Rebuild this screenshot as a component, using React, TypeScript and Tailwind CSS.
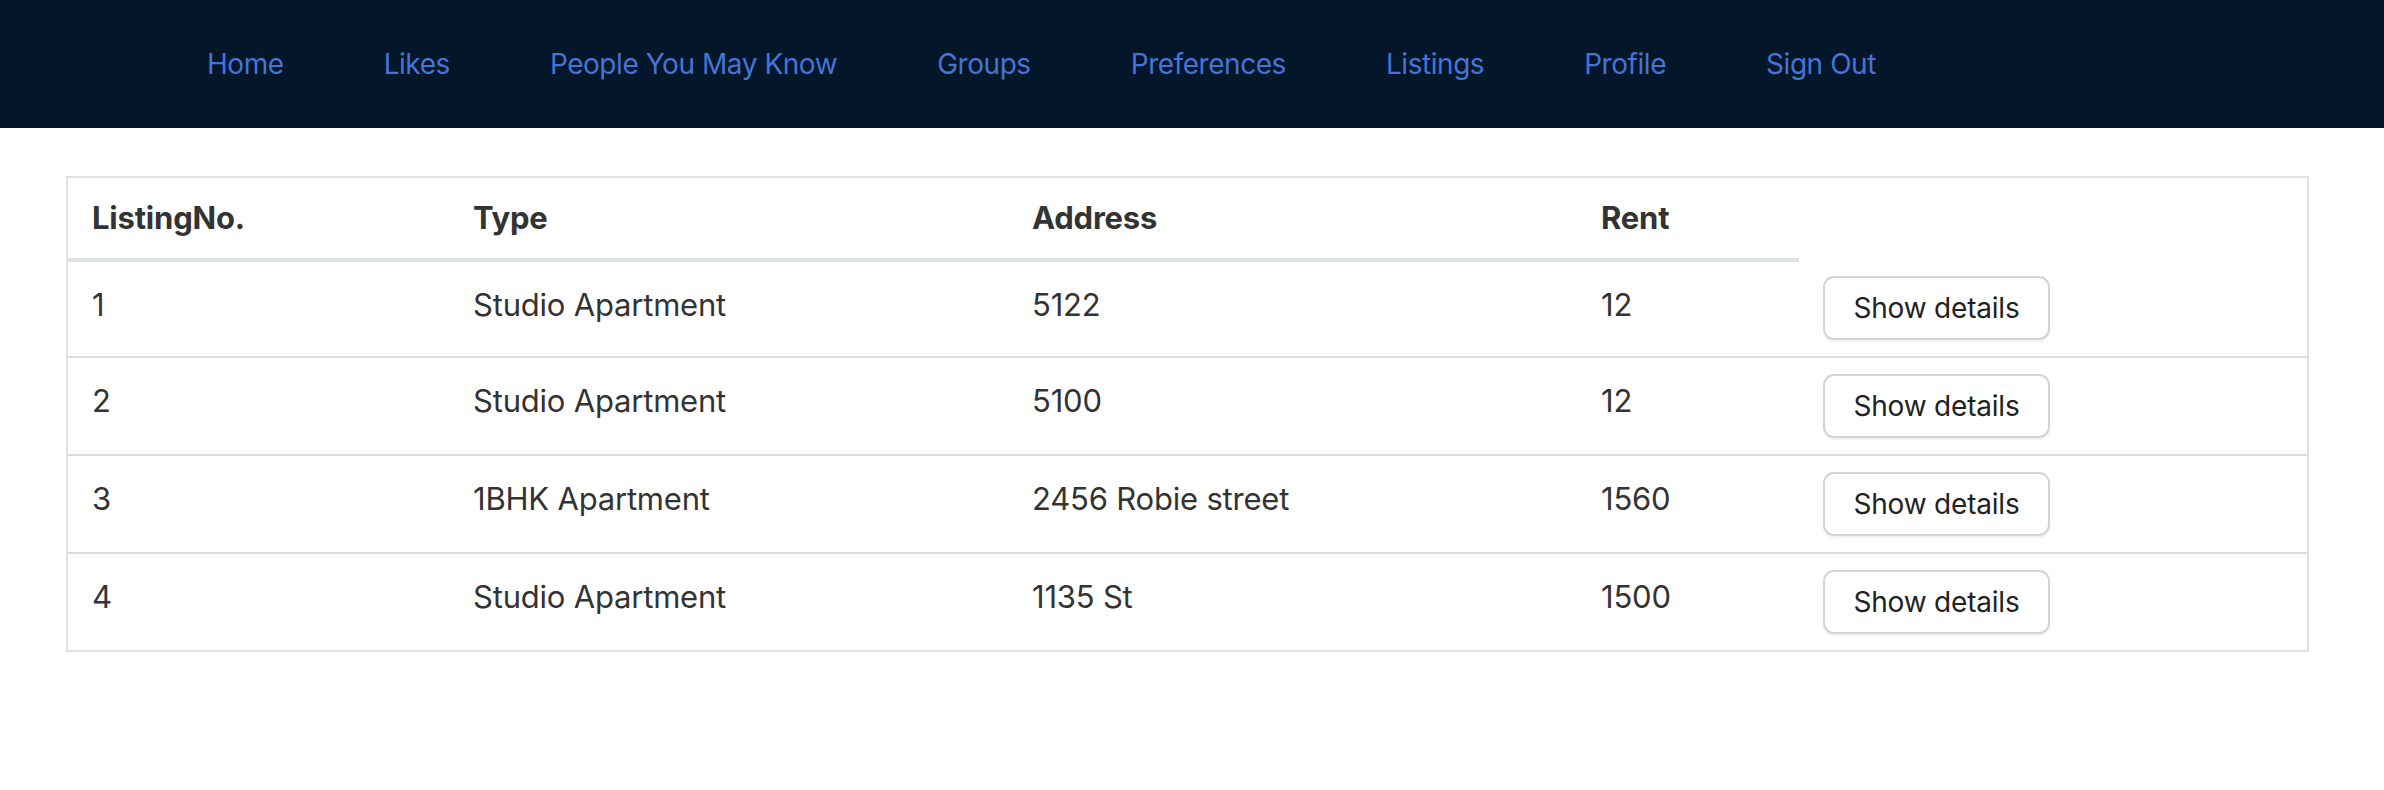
import React from "react";

const navLinks = [
  "Home",
  "Likes",
  "People You May Know",
  "Groups",
  "Preferences",
  "Listings",
  "Profile",
  "Sign Out",
];

const listings = [
  { no: 1, type: "Studio Apartment", address: "5122", rent: "12" },
  { no: 2, type: "Studio Apartment", address: "5100", rent: "12" },
  { no: 3, type: "1BHK Apartment", address: "2456 Robie street", rent: "1560" },
  { no: 4, type: "Studio Apartment", address: "1135 St", rent: "1500" },
];

export default function App() {
  return (
    <div
      className="min-h-[790px] w-[2384px] bg-white text-[#333333]"
      style={{ fontFamily: "Inter, 'Noto Sans', sans-serif" }}
    >
      {/* Top navigation */}
      <nav className="flex h-[128px] items-center gap-[100px] bg-[#03162a] pl-[207px]">
        {navLinks.map((label) => (
          <a
            key={label}
            href="#"
            className="text-[28px] leading-none tracking-[-0.45px] text-[#4375d6]"
          >
            {label}
          </a>
        ))}
      </nav>

      {/* Listings table */}
      <div className="pl-[66px] pt-[48px]">
        <table className="w-[2243px] table-fixed border-collapse border-2 border-[#dee2e6] text-[31px] leading-[48px] tracking-[-0.2px]">
          <colgroup>
            <col className="w-[382px]" />
            <col className="w-[559px]" />
            <col className="w-[569px]" />
            <col className="w-[222px]" />
            <col />
          </colgroup>
          <thead>
            <tr>
              {["ListingNo.", "Type", "Address", "Rent"].map((h) => (
                <th
                  key={h}
                  className="border-b-4 border-[#dee2e6] px-[24px] py-[16px] text-left align-top font-bold"
                >
                  {h}
                </th>
              ))}
            </tr>
          </thead>
          <tbody>
            {listings.map((l) => (
              <tr key={l.no} className="border-t-2 border-[#dcdcdc] first:border-t-0">
                <td className="px-[24px] pt-[19px] pb-[13px] align-top">{l.no}</td>
                <td className="px-[24px] pt-[19px] pb-[13px] align-top">{l.type}</td>
                <td className="px-[24px] pt-[19px] pb-[13px] align-top">{l.address}</td>
                <td className="px-[24px] pt-[19px] pb-[13px] align-top">{l.rent}</td>
                <td className="px-[24px] pt-[16px] pb-[16px] align-top">
                  <button className="flex h-[64px] w-[227px] items-center justify-center rounded-[11px] border-2 border-[#d4d4d4] bg-white text-[28px] tracking-[-0.2px] text-[#222222] shadow-[0_2px_2px_rgba(0,0,0,0.06)]">
                    Show details
                  </button>
                </td>
              </tr>
            ))}
          </tbody>
        </table>
      </div>
    </div>
  );
}
